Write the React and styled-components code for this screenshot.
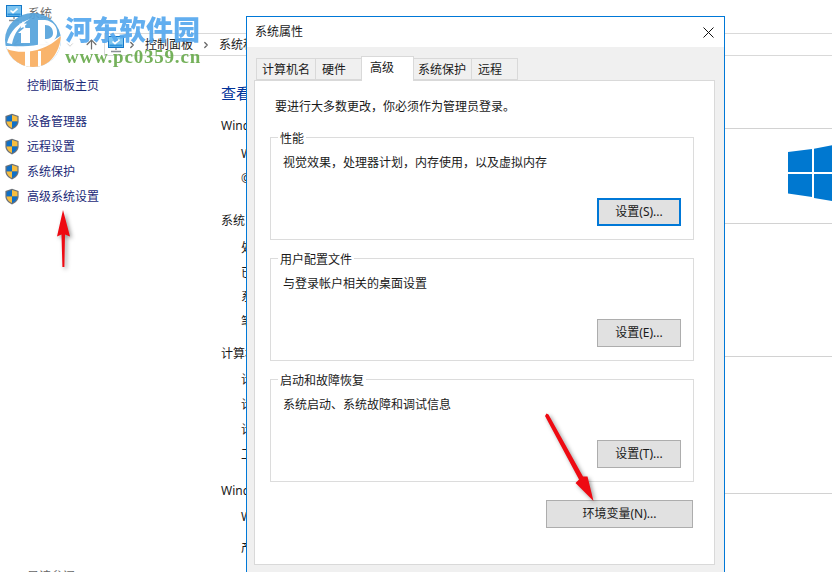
import styled, { createGlobalStyle } from "styled-components";
import { ArrowLeft, ArrowRight, ArrowUp, ChevronDown, ChevronRight } from "lucide-react";

const GlobalStyle = createGlobalStyle`
  html, body {
    margin: 0;
    padding: 0;
    background: #fff;
  }
  * {
    box-sizing: border-box;
  }
`;

const FONT = `"Noto Sans", "Noto Sans CJK SC", sans-serif`;

const MonitorIcon = () => (
  <svg width="16" height="17" viewBox="0 0 16 17">
    <rect x="0.5" y="0.5" width="15" height="11" fill="#7cc4f0" stroke="#1478c8" />
    <rect x="1.5" y="8.5" width="13" height="2" fill="#2e93dc" />
    <path d="M4.5 5.5l2.5 2.2 4.5-4" fill="none" stroke="#fff" strokeWidth="1.6" />
    <path d="M8 12v2M3 15.5h10" stroke="#8a8f94" strokeWidth="1.4" />
  </svg>
);

const ShieldIcon = () => (
  <svg width="16" height="17" viewBox="0 0 16 17">
    <path d="M8 .8l6.6 2.2v5.4c0 3.7-3 6.400-6.600 8-3.600-1.600-6.600-4.300-6.600-8V3z" fill="#6d7278" />
    <path d="M8 2v6.500H2.600V3.800z" fill="#0f6fc6" />
    <path d="M8 2l5.400 1.800v4.700H8z" fill="#f6bd3f" />
    <path d="M2.600 8.500H8v6.600c-2.800-1.400-5.400-3.600-5.400-6.600z" fill="#f6bd3f" />
    <path d="M8 8.500h5.400c0 3-2.600 5.200-5.400 6.600z" fill="#0f6fc6" />
  </svg>
);

const SiteLogo = () => (
  <svg width="58" height="55" viewBox="0 0 58 55">
    <defs>
      <clipPath id="logoDisc">
        <ellipse cx="28" cy="27" rx="28" ry="27" />
      </clipPath>
    </defs>
    <g clipPath="url(#logoDisc)">
      <rect width="58" height="55" fill="#55a3dc" />
      <path d="M0 33C12 33 38 36 58 21V55H0z" fill="#fff" />
      <path d="M2 36c12 5 36 5 54-13-1 16-12 32-28 32C15 55 6 47 2 36z" fill="#f9ae60" />
      <path d="M2 30C5 18 13 10 25 6 15 12 9 20 7 31z" fill="#fff" />
      <path d="M19 15l-6 5h3v10h9V15z" fill="#fff" />
      <path d="M33 7h7c8 1 13 7 12 14-1 6-6 9-12 9v3h-7zM40 12v14c5 0 8-2 8-6 0-5-3-8-8-8z" fill="#fff" />
      <path d="M18 8l1.200 2.500 2.800.3-2 1.900.5 2.800-2.500-1.300-2.500 1.300.5-2.800-2-1.900 2.800-.3z" fill="#fff" />
      <rect x="20" y="38" width="5" height="17" fill="#fff" />
      <rect x="33" y="38" width="3" height="17" fill="#fff" />
    </g>
  </svg>
);

const sections = [
  { title: "Windows 版本", height: 95, first: 4, rowHeight: 24.5, rows: ["Windows 10 专业版", "© 2017 Microsoft Corporation"], logo: true },
  { title: "系统", height: 133, first: 3, rowHeight: 24.5, rows: ["处理器：", "已安装的内存(RAM)：", "系统类型：", "笔和触控："] },
  { title: "计算机名、域和工作组设置", height: 137, first: 2, rowHeight: 25, rows: ["计算机名：", "计算机全名：", "计算机描述：", "工作组："] },
  { title: "Windows 激活", height: 90, first: 2, rowHeight: 31, rows: ["Windows 已激活", "产品 ID："] },
];

const sideLinks = ["设备管理器", "远程设置", "系统保护", "高级系统设置"];

const groups = [
  { title: "性能", text: "视觉效果，处理器计划，内存使用，以及虚拟内存", button: "设置(S)...", focused: true },
  { title: "用户配置文件", text: "与登录帐户相关的桌面设置", button: "设置(E)..." },
  { title: "启动和故障恢复", text: "系统启动、系统故障和调试信息", button: "设置(T)..." },
];

const tabs = [
  { label: "计算机名", width: 60, pad: 5 },
  { label: "硬件", width: 47, pad: 6 },
  { label: "高级", width: 53, pad: 8, active: true },
  { label: "系统保护", width: 59, pad: 4 },
  { label: "远程", width: 47, pad: 6 },
];

const App = () => {
  return (
    <Page lang="zh-CN">
      <GlobalStyle />
      <TitleRow>
        <MonitorIcon />
        <span>系统</span>
      </TitleRow>
      <NavRow>
        <NavButtons>
          <NavButton $w={26}><ArrowLeft size={15} /></NavButton>
          <NavButton $w={26}><ArrowRight size={15} /></NavButton>
          <NavButton $w={26}><ChevronDown size={10} /></NavButton>
          <NavButton $w={16} $dark><ArrowUp size={15} /></NavButton>
        </NavButtons>
        <AddressBar>
          <CrumbIcon><MonitorIcon /></CrumbIcon>
          <ChevronRight size={10} strokeWidth={3} color="#666" />
          <span>控制面板</span>
          <ChevronRight size={10} strokeWidth={3} color="#666" />
          <span>系统和安全</span>
        </AddressBar>
      </NavRow>
      <Body>
        <Sidebar>
          <HomeLink>控制面板主页</HomeLink>
          {sideLinks.map((link) => (
            <SideLink key={link}>
              <ShieldIcon />
              <span>{link}</span>
            </SideLink>
          ))}
          <SeeAlso>另请参阅</SeeAlso>
        </Sidebar>
        <Main>
          <MainTitle>查看有关计算机的基本信息</MainTitle>
          {sections.map((section) => (
            <Section key={section.title} $h={section.height}>
              <SectionHead>
                <span>{section.title}</span>
                <HeadLine />
              </SectionHead>
              <SectionBody $first={section.first}>
                <RowList>
                  {section.rows.map((row) => (
                    <InfoRow key={row} $h={section.rowHeight}>{row}</InfoRow>
                  ))}
                </RowList>
                {section.logo && (
                  <WinLogo viewBox="0 -1 50 58" width="50" height="58">
                    <path d="M0 7l24-3v23H0zM26 3.700L50-1v28H26zM0 29h24v23L0 48.500zM26 29h24v28l-24-4z" fill="#0078d0" />
                  </WinLogo>
                )}
              </SectionBody>
            </Section>
          ))}
        </Main>
      </Body>

      <Dialog>
        <DialogTitle>
          <span>系统属性</span>
          <CloseIcon viewBox="0 0 11 11" width="11" height="11">
            <path d="M.5.500l10 10M10.500.500l-10 10" stroke="#111" fill="none" />
          </CloseIcon>
        </DialogTitle>
        <DialogBody>
          <TabRow>
            {tabs.map((tab) => (
              <Tab key={tab.label} $w={tab.width} $pad={tab.pad} $active={tab.active}>{tab.label}</Tab>
            ))}
          </TabRow>
          <TabPanel>
            <Hint>要进行大多数更改，你必须作为管理员登录。</Hint>
            {groups.map((group) => (
              <Group key={group.title}>
                <Legend>{group.title}</Legend>
                <GroupText>{group.text}</GroupText>
                <SettingsButton $focused={group.focused}>{group.button}</SettingsButton>
              </Group>
            ))}
            <EnvButton>环境变量(N)...</EnvButton>
          </TabPanel>
        </DialogBody>
      </Dialog>

      <Watermark>
        <SiteLogo />
        <WatermarkText>
          <strong>河东软件园</strong>
          <em>www.pc0359.cn</em>
        </WatermarkText>
      </Watermark>

      <Arrow $left={52} $top={206} width="24" height="66" viewBox="52 206 24 66">
        <path d="M63 210L70 236.500 65 234.500 64.400 267 62.400 267 61.500 234.500 57 236.500z" fill="#ee0a12" />
      </Arrow>
      <Arrow $left={540} $top={408} width="62" height="98" viewBox="540 408 62 98">
        <path d="M546.500 413.500L548.500 414.500 583 476.500 587.500 476.500 593.500 501 575.500 483 579 479.500 545 416z" fill="#ee0a12" />
      </Arrow>
    </Page>
  );
};

const Page = styled.div`
  position: relative;
  width: 832px;
  height: 572px;
  overflow: hidden;
  background: #fff;
  color: #1a1a1a;
  font-family: ${FONT};
  font-size: 12px;
  line-height: 16px;
`;

const TitleRow = styled.div`
  height: 33px;
  padding: 5px 0 0 6px;
  display: flex;
  gap: 6px;
  color: #666;

  span {
    margin-top: 1px;
  }
`;

const NavRow = styled.div`
  height: 23px;
  display: flex;
`;

const NavButtons = styled.div`
  width: 104px;
  padding-left: 5px;
  display: flex;
  align-items: center;
`;

const NavButton = styled.div`
  width: ${(p) => p.$w}px;
  display: flex;
  justify-content: center;
  color: ${(p) => (p.$dark ? "#6e6e6e" : "#c8c8c8")};
`;

const AddressBar = styled.div`
  flex: 1;
  display: flex;
  align-items: center;
  gap: 8px;
  padding-left: 3px;
  border: 1px solid #d9d9d9;
  border-right: none;
  color: #222;
`;

const CrumbIcon = styled.span`
  display: flex;
  margin-right: -5px;
`;

const Body = styled.div`
  display: flex;
`;

const Sidebar = styled.nav`
  width: 221px;
  flex-shrink: 0;
  padding-top: 17px;
  display: flex;
  flex-direction: column;
`;

const HomeLink = styled.div`
  height: 25px;
  padding: 5px 0 0 27px;
  margin-bottom: 11px;
  color: #1c2a78;
`;

const SideLink = styled.div`
  height: 25px;
  padding-left: 4px;
  display: flex;
  align-items: center;
  gap: 7px;
  color: #1c2a78;
`;

const SeeAlso = styled.div`
  margin-top: 360px;
  padding-left: 27px;
  color: #666;
`;

const Main = styled.main`
  flex: 1;
  min-width: 0;
  padding-top: 26px;
`;

const MainTitle = styled.h1`
  margin: 0 0 10px;
  height: 22px;
  font-size: 15px;
  line-height: 22px;
  font-weight: 400;
  color: #003399;
  white-space: nowrap;
`;

const Section = styled.section`
  height: ${(p) => p.$h}px;
`;

const SectionHead = styled.div`
  height: 24px;
  display: flex;
  align-items: center;
  gap: 6px;
`;

const HeadLine = styled.div`
  flex: 1;
  height: 1px;
  margin-top: 5px;
  background: #d2d2d2;
`;

const SectionBody = styled.div`
  margin-top: ${(p) => p.$first}px;
  padding-left: 20px;
  display: flex;
  justify-content: space-between;
`;

const RowList = styled.div`
  white-space: nowrap;
`;

const InfoRow = styled.div`
  height: ${(p) => p.$h}px;
  line-height: 24px;
`;

const WinLogo = styled.svg`
  flex-shrink: 0;
  margin: 2px -6px 0 0;
  overflow: visible;
`;

const Dialog = styled.div`
  position: absolute;
  left: 246px;
  top: 16px;
  width: 479px;
  height: 570px;
  border: 1px solid #0078d7;
  background: #f0f0f0;
  display: flex;
  flex-direction: column;
`;

const DialogTitle = styled.div`
  height: 30px;
  flex-shrink: 0;
  padding: 0 10px 0 8px;
  background: #fff;
  display: flex;
  align-items: center;
  justify-content: space-between;
`;

const CloseIcon = styled.svg`
  display: block;
`;

const DialogBody = styled.div`
  padding: 9px 0 0 7px;
`;

const TabRow = styled.div`
  position: relative;
  z-index: 1;
  height: 24px;
  padding-left: 2px;
  display: flex;
  align-items: flex-end;
`;

const Tab = styled.div`
  width: ${(p) => p.$w}px;
  height: ${(p) => (p.$active ? 25 : 22)}px;
  margin-bottom: ${(p) => (p.$active ? -1 : 0)}px;
  margin-left: -1px;
  padding-left: ${(p) => p.$pad}px;
  border: 1px solid #d9d9d9;
  border-bottom: ${(p) => (p.$active ? "none" : "1px solid #d9d9d9")};
  background: ${(p) => (p.$active ? "#fff" : "#f0f0f0")};
  line-height: 21px;

  &:first-child {
    margin-left: 0;
  }
`;

const TabPanel = styled.div`
  width: 461px;
  height: 485px;
  padding: 0 15px;
  border: 1px solid #d9d9d9;
  background: #fff;
`;

const Hint = styled.div`
  height: 16px;
  margin: 18px 0 22px 5px;
`;

const Group = styled.div`
  position: relative;
  width: 424px;
  height: 103px;
  margin-top: 18px;
  padding: 17px 12px 13px;
  border: 1px solid #dcdcdc;
  display: flex;
  flex-direction: column;
  align-items: flex-start;

  ${Hint} + & {
    margin-top: 0;
  }
`;

const Legend = styled.span`
  position: absolute;
  top: -7px;
  left: 7px;
  padding: 0 2px;
  background: #fff;
`;

const GroupText = styled.div`
  height: 16px;
`;

const SettingsButton = styled.button`
  align-self: flex-end;
  margin-top: auto;
  width: 84px;
  height: 28px;
  padding: 0;
  border: ${(p) => (p.$focused ? "2px solid #0078d7" : "1px solid #adadad")};
  background: #e1e1e1;
  color: #1a1a1a;
  font: inherit;
`;

const EnvButton = styled.button`
  display: block;
  margin: 18px 0 0 276px;
  width: 147px;
  height: 28px;
  padding: 0;
  border: 1px solid #adadad;
  background: #e1e1e1;
  color: #1a1a1a;
  font: inherit;
`;

const Watermark = styled.div`
  position: absolute;
  left: 5px;
  top: 13px;
  display: flex;
  gap: 2px;
  opacity: 0.92;
`;

const WatermarkText = styled.div`
  display: flex;
  flex-direction: column;
  align-items: flex-start;

  strong {
    font-size: 27px;
    line-height: 34px;
    font-weight: 900;
    color: #55a8ee;
    white-space: nowrap;
  }

  em {
    font-family: "Liberation Serif", serif;
    font-style: normal;
    font-weight: 700;
    font-size: 19px;
    line-height: 20px;
    letter-spacing: 0.8px;
    color: #6aab4e;
    white-space: nowrap;
  }
`;

const Arrow = styled.svg`
  position: absolute;
  left: ${(p) => p.$left}px;
  top: ${(p) => p.$top}px;
  filter: drop-shadow(2px 2px 2px rgba(0, 0, 0, 0.4));
`;

export default App;
